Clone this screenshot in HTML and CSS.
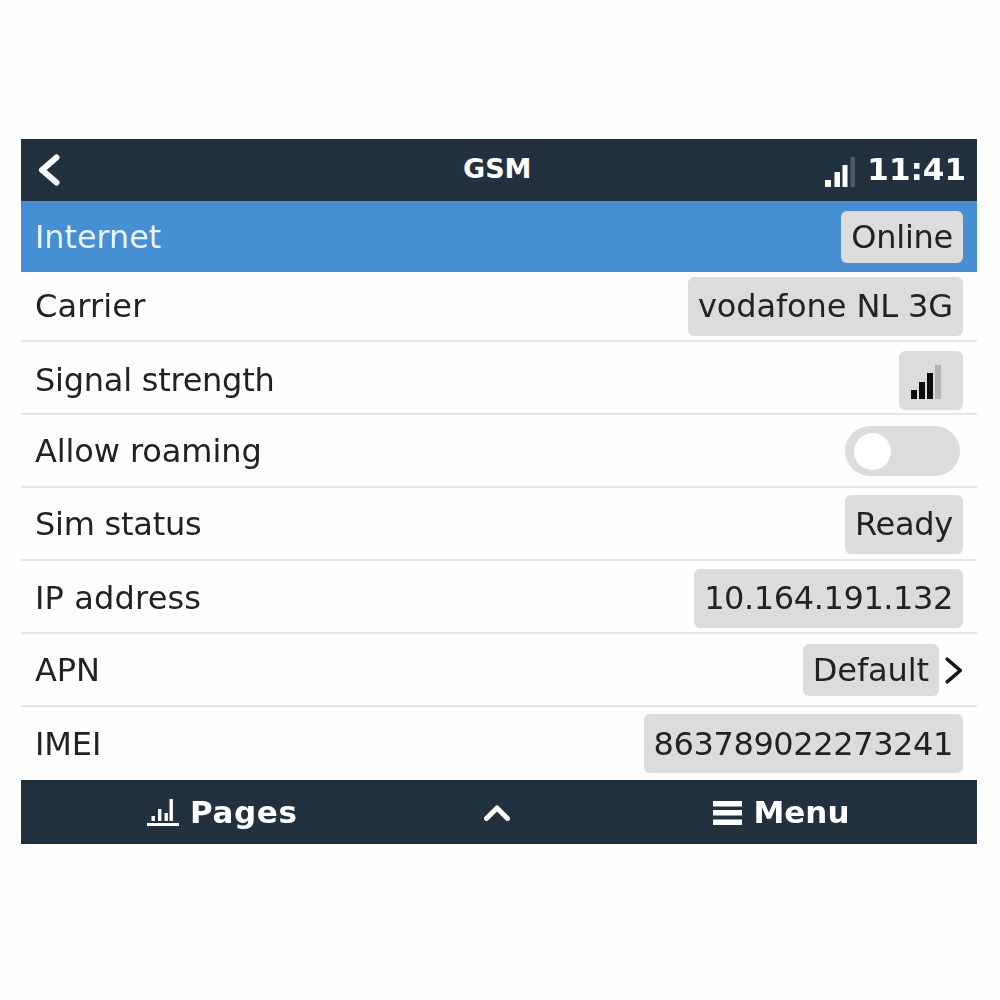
FILE: index.html
```html
<!DOCTYPE html>
<html lang="en">
<head>
<meta charset="utf-8">
<title>GSM</title>
<link rel="stylesheet" href="styles.css">
</head>
<body>
<main class="panel">
  <header class="bar top">
    <svg class="back" viewBox="0 0 22 32"><path d="M18.500 3.500 4 16l14.500 12.500"/></svg>
    <span class="title">GSM</span>
    <div class="status">
      <svg class="signal-top" viewBox="0 0 30 30">
        <rect x="0" y="23" width="6" height="7"/>
        <rect x="9.500" y="15" width="5.500" height="15"/>
        <rect x="17.500" y="8" width="5" height="22"/>
        <rect class="dim" x="25.500" y="0" width="4.500" height="30"/>
      </svg>
      <span class="clock">11:41</span>
    </div>
  </header>
  <div class="row selected"><span>Internet</span><span class="pill short tight">Online</span></div>
  <div class="row first"><span class="wide">Carrier</span><span class="pill">vodafone NL 3G</span></div>
  <div class="row signal-row"><span class="tight">Signal strength</span>
    <span class="pill icon-pill">
      <svg class="signal" viewBox="0 0 30 34">
        <rect x="0" y="25" width="6" height="9"/>
        <rect x="8" y="17" width="6" height="17"/>
        <rect x="16" y="8" width="6" height="26"/>
        <rect class="dim" x="24" y="0" width="6" height="34"/>
      </svg>
    </span>
  </div>
  <div class="row"><span>Allow roaming</span><span class="toggle"><span class="knob"></span></span></div>
  <div class="row"><span class="tight">Sim status</span><span class="pill tight">Ready</span></div>
  <div class="row ip-row"><span class="wide">IP address</span><span class="pill digits">10.164.191.132</span></div>
  <div class="row"><span>APN</span>
    <div class="link"><span class="pill short">Default</span>
      <svg class="next" viewBox="0 0 20 30"><path d="M2.500 2.500 17 15 2.500 27.500"/></svg>
    </div>
  </div>
  <div class="row last"><span>IMEI</span><span class="pill digits">863789022273241</span></div>
  <footer class="bar bottom">
    <div class="action">
      <svg class="pages-icon" viewBox="0 0 32 27">
        <rect x="0" y="24" width="32" height="3"/>
        <rect x="4.500" y="17" width="3.400" height="5"/>
        <rect x="11" y="10" width="3.400" height="12"/>
        <rect x="17.500" y="14" width="3.400" height="8"/>
        <rect x="22.500" y="0" width="3.400" height="22"/>
      </svg>
      <span class="pages">Pages</span>
    </div>
    <svg class="caret" viewBox="0 0 26 16"><path d="M2.500 13.500 13 3l10.500 10.500"/></svg>
    <div class="action">
      <svg class="menu-icon" viewBox="0 0 29 24">
        <rect x="0" y="0" width="29" height="5.500"/>
        <rect x="0" y="9" width="29" height="5.500"/>
        <rect x="0" y="18.500" width="29" height="5.500"/>
      </svg>
      <span>Menu</span>
    </div>
  </footer>
</main>
</body>
</html>
```
FILE: styles.css
```css
* { box-sizing: border-box; }

html, body { margin: 0; background: #fefefe; }

body {
  padding: 139px 0 0 21px;
  font-family: "DejaVu Sans", sans-serif;
  color: #222;
}

.panel {
  width: 956px;
  filter: blur(0.6px);
}

.bar {
  display: flex;
  align-items: center;
  background: #223140;
  color: #fff;
  font-weight: 700;
}

.top { height: 62px; padding: 0 11px 0 17px; }

.back { width: 22px; height: 32px; flex: none; }
.back path, .caret path {
  fill: none;
  stroke: #fff;
  stroke-linecap: round;
  stroke-linejoin: round;
}
.back path { stroke-width: 6; }
.caret path { stroke-width: 5; }

.title { margin-left: 403px; margin-bottom: 3px; font-size: 27px; }

.status { margin-left: auto; display: flex; align-items: center; gap: 14px; }
.signal-top { width: 30px; height: 30px; fill: #fff; margin: 3px -2px 0 0; }
.signal-top .dim { fill: #4d5a67; }
.clock { font-size: 31px; margin-bottom: 2px; }

.row {
  display: flex;
  align-items: center;
  justify-content: space-between;
  height: 73px;
  padding: 1px 14px 0 14px;
  border-bottom: 2px solid #e5e5e5;
  font-size: 32px;
  letter-spacing: -0.1px;
}

.selected {
  height: 71px;
  padding-top: 0;
  background: #458fd2;
  color: #eaf3fb;
  border-bottom: 0;
}
.first { height: 70px; padding-top: 0; }
.signal-row { padding-top: 5px; }
.ip-row { padding-top: 3px; }
.last { border-bottom: 0; padding-top: 0; }

.tight { letter-spacing: -0.25px; }
.wide { letter-spacing: 0.15px; }
.digits { letter-spacing: -0.4px; }

.pill {
  display: flex;
  align-items: center;
  height: 59px;
  padding: 0 10px;
  border-radius: 6px;
  background: #dcdcdc;
  color: #222;
}
.short { height: 52px; }

.icon-pill { width: 64px; justify-content: center; padding: 0; }
.signal { width: 30px; height: 34px; fill: #0c0c0c; margin: 4px 10px 0 0; }
.signal .dim { fill: #b4b4b4; }

.toggle {
  display: flex;
  align-items: center;
  width: 115px;
  height: 50px;
  margin-right: 3px;
  padding-left: 9px;
  border-radius: 25px;
  background: #dcdcdc;
}
.knob { width: 37px; height: 37px; border-radius: 50%; background: #fff; }

.link { display: flex; align-items: center; gap: 6px; }
.next { width: 18px; height: 29px; }
.next path { fill: none; stroke: #111; stroke-width: 4; stroke-linecap: round; stroke-linejoin: round; }

.bottom { height: 64px; padding-left: 126px; font-size: 31px; }
.action { display: flex; align-items: center; gap: 11px; }
.pages { letter-spacing: 0.6px; }
.pages-icon { width: 32px; height: 27px; fill: #fff; }
.menu-icon { width: 29px; height: 24px; fill: #fff; margin-top: 2px; }
.caret { width: 26px; height: 16px; margin: 2px 203px 0 187px; }
```
